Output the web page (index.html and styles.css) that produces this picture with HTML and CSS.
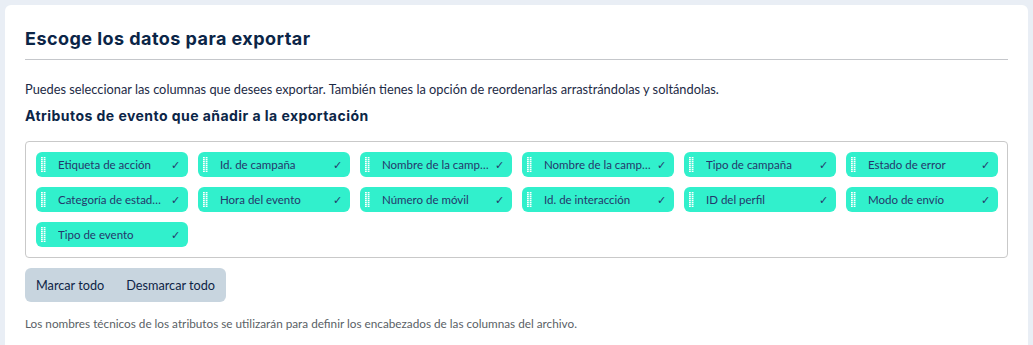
FILE: index.html
```html
<!DOCTYPE html>
<html lang="es">
<head>
<meta charset="utf-8">
<link rel="stylesheet" href="styles.css">
</head>
<body>
<svg class="defs" width="0" height="0"><defs><g id="g" fill="#fff"><rect x="0" y="0" width="1.8" height="1.4"/><rect x="2.7" y="0" width="1.8" height="1.4"/><rect x="0" y="2" width="1.8" height="1.4"/><rect x="2.7" y="2" width="1.8" height="1.4"/><rect x="0" y="4" width="1.8" height="1.4"/><rect x="2.7" y="4" width="1.8" height="1.4"/><rect x="0" y="6" width="1.8" height="1.4"/><rect x="2.7" y="6" width="1.8" height="1.4"/><rect x="0" y="8" width="1.8" height="1.4"/><rect x="2.7" y="8" width="1.8" height="1.4"/><rect x="0" y="10" width="1.8" height="1.4"/><rect x="2.7" y="10" width="1.8" height="1.4"/><rect x="0" y="12" width="1.8" height="1.4"/><rect x="2.7" y="12" width="1.8" height="1.4"/><rect x="0" y="14" width="1.8" height="1.4"/><rect x="2.7" y="14" width="1.8" height="1.4"/></g></defs></svg>
<div class="card">
  <h1 class="title">Escoge los datos para exportar</h1>
  <p class="desc">Puedes seleccionar las columnas que desees exportar. También tienes la opción de reordenarlas arrastrándolas y soltándolas.</p>
  <h2 class="subtitle">Atributos de evento que añadir a la exportación</h2>
  <div class="chips">
    <div class="chip"><svg class="grip" viewBox="0 0 4.5 15.4" width="4.5" height="15.4"><use href="#g"/></svg><span class="label">Etiqueta de acción</span><span class="check">✓</span></div>
    <div class="chip"><svg class="grip" viewBox="0 0 4.5 15.4" width="4.5" height="15.4"><use href="#g"/></svg><span class="label">Id. de campaña</span><span class="check">✓</span></div>
    <div class="chip"><svg class="grip" viewBox="0 0 4.5 15.4" width="4.5" height="15.4"><use href="#g"/></svg><span class="label">Nombre de la campaña</span><span class="check">✓</span></div>
    <div class="chip"><svg class="grip" viewBox="0 0 4.5 15.4" width="4.5" height="15.4"><use href="#g"/></svg><span class="label">Nombre de la campaña padre</span><span class="check">✓</span></div>
    <div class="chip"><svg class="grip" viewBox="0 0 4.5 15.4" width="4.5" height="15.4"><use href="#g"/></svg><span class="label">Tipo de campaña</span><span class="check">✓</span></div>
    <div class="chip"><svg class="grip" viewBox="0 0 4.5 15.4" width="4.5" height="15.4"><use href="#g"/></svg><span class="label">Estado de error</span><span class="check">✓</span></div>
    <div class="chip"><svg class="grip" viewBox="0 0 4.5 15.4" width="4.5" height="15.4"><use href="#g"/></svg><span class="label">Categoría de estado de error</span><span class="check">✓</span></div>
    <div class="chip"><svg class="grip" viewBox="0 0 4.5 15.4" width="4.5" height="15.4"><use href="#g"/></svg><span class="label">Hora del evento</span><span class="check">✓</span></div>
    <div class="chip"><svg class="grip" viewBox="0 0 4.5 15.4" width="4.5" height="15.4"><use href="#g"/></svg><span class="label">Número de móvil</span><span class="check">✓</span></div>
    <div class="chip"><svg class="grip" viewBox="0 0 4.5 15.4" width="4.5" height="15.4"><use href="#g"/></svg><span class="label">Id. de interacción</span><span class="check">✓</span></div>
    <div class="chip"><svg class="grip" viewBox="0 0 4.5 15.4" width="4.5" height="15.4"><use href="#g"/></svg><span class="label">ID del perfil</span><span class="check">✓</span></div>
    <div class="chip"><svg class="grip" viewBox="0 0 4.5 15.4" width="4.5" height="15.4"><use href="#g"/></svg><span class="label">Modo de envío</span><span class="check">✓</span></div>
    <div class="chip"><svg class="grip" viewBox="0 0 4.5 15.4" width="4.5" height="15.4"><use href="#g"/></svg><span class="label">Tipo de evento</span><span class="check">✓</span></div>
  </div>
  <div class="actions">
    <button class="btn">Marcar todo</button>
    <button class="btn">Desmarcar todo</button>
  </div>
  <p class="note">Los nombres técnicos de los atributos se utilizarán para definir los encabezados de las columnas del archivo.</p>
</div>
</body>
</html>
```
FILE: styles.css
```css
html, body {
  margin: 0;
  padding: 0;
}
body {
  background: #e9eef5;
  padding: 5px 5px 0 5px;
  height: 345px;
  box-sizing: border-box;
  overflow: hidden;
  font-family: "Lato", "Open Sans", sans-serif;
  color: #0e2446;
}
.defs {
  position: absolute;
  width: 0;
  height: 0;
}
.card {
  background: #fff;
  border-radius: 6px 6px 0 0;
  padding: 23px 20px 20px 20px;
  height: 345px;
  box-sizing: border-box;
  width: 1023px;
}
.title {
  font-family: "Inter", sans-serif;
  font-weight: 700;
  font-size: 18px;
  letter-spacing: 0.45px;
  line-height: 22px;
  margin: 0;
  padding-bottom: 9px;
  border-bottom: 1px solid #c5c7cb;
  color: #0b2547;
}
.desc {
  margin: 21px 0 0 0;
  font-size: 12.8px;
  line-height: 16px;
  color: #1c2a45;
}
.subtitle {
  font-family: "Inter", sans-serif;
  font-weight: 700;
  font-size: 14px;
  letter-spacing: 0.45px;
  line-height: 18px;
  margin: 10px 0 0 0;
  color: #0b2547;
}
.chips {
  margin-top: 16px;
  border: 1px solid #c9c9c9;
  border-radius: 4px;
  padding: 10px;
  display: grid;
  grid-template-columns: repeat(6, 152px);
  gap: 10px;
}
.chip {
  height: 25px;
  background: #31f0cc;
  border-radius: 6px;
  display: flex;
  align-items: center;
  padding: 0 8px 0 5px;
  box-sizing: border-box;
  color: #25366b;
  font-size: 11.5px;
}
.grip {
  flex: none;
  margin-right: 12.5px;
}
.label {
  flex: 1;
  white-space: nowrap;
  overflow: hidden;
  text-overflow: ellipsis;
}
.check {
  flex: none;
  font-size: 10.5px;
  margin-left: 6px;
  color: #25366b;
}
.actions {
  margin-top: 10px;
  display: inline-flex;
  background: #c8d5df;
  border-radius: 6px;
  height: 34px;
  align-items: center;
}
.btn {
  border: 0;
  background: transparent;
  font-family: "Lato", sans-serif;
  font-size: 12.7px;
  color: #0e2446;
  padding: 0 11px;
  height: 34px;
  cursor: pointer;
}
.note {
  margin: 14px 0 0 0;
  font-size: 11.75px;
  color: #5a5f66;
}
```
